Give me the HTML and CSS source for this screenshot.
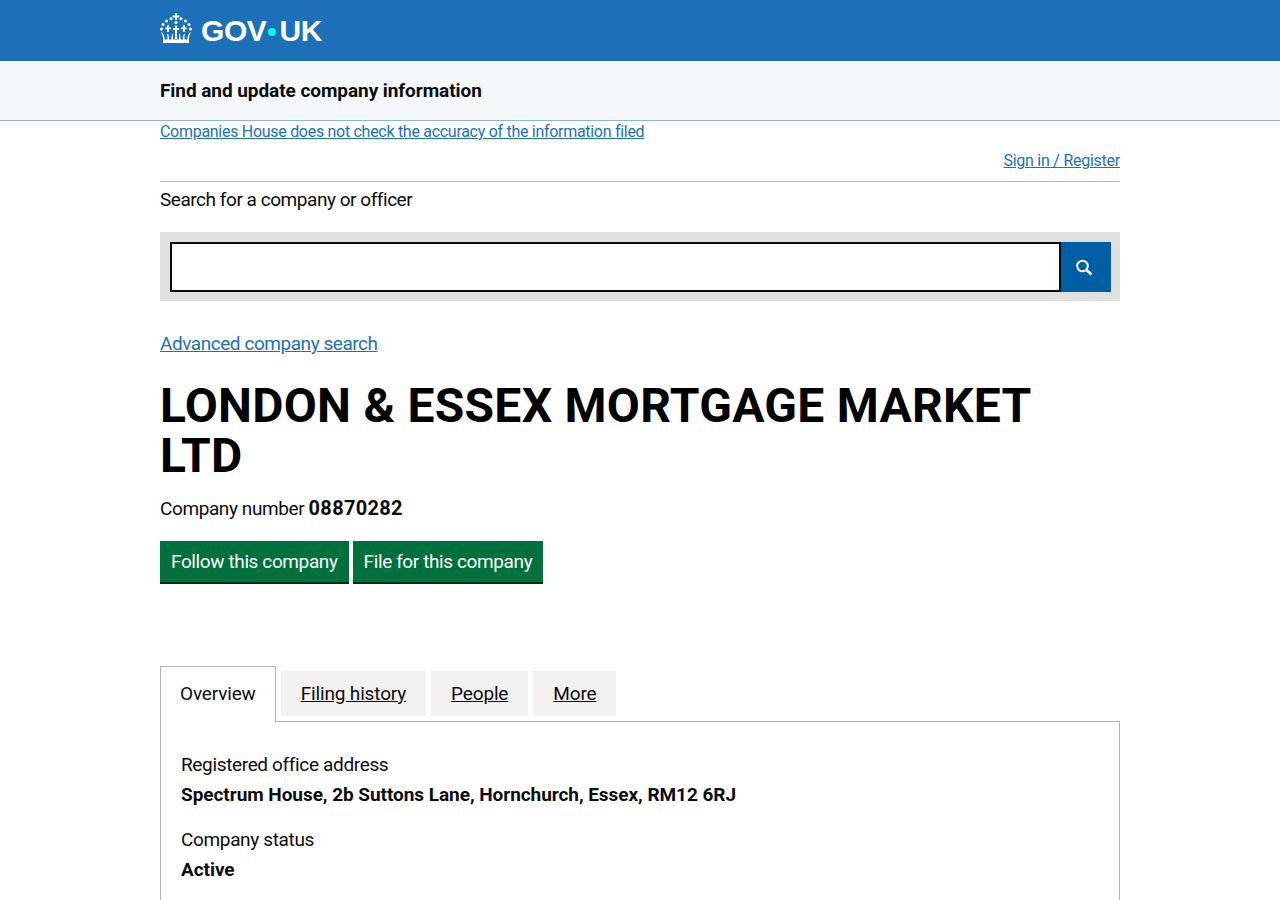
FILE: index.html
```html
<!DOCTYPE html>
<html lang="en">
<head>
    <meta charset="UTF-8">
    <meta name="viewport" content="width=device-width, initial-scale=1.0">
    <title>LONDON &amp; ESSEX MORTGAGE MARKET LTD - Find and update company information</title>
    <link rel="stylesheet" href="styles.css">
</head>
<body>
    <div class="header">
        <div class="wrap header-inner">
            <svg class="crown" viewBox="0 0 32 30" width="32" height="30" fill="#fff">
                <path d="M15 0h2v2.400h2.400v2H17V7h-2V4.400h-2.400v-2H15z"/>
                <circle cx="16" cy="9.500" r="1.500"/>
                <circle cx="11" cy="5.800" r="1.500"/>
                <circle cx="21" cy="5.800" r="1.500"/>
                <circle cx="6.500" cy="8" r="1.500"/>
                <circle cx="25.500" cy="8" r="1.500"/>
                <circle cx="3" cy="11.500" r="1.500"/>
                <circle cx="29" cy="11.500" r="1.500"/>
                <circle cx="1.500" cy="16" r="1.500"/>
                <circle cx="30.500" cy="16" r="1.500"/>
                <path d="M7 12h2v2.500h1.800v1.800H9V19H7v-2.700H5.200v-1.800H7z"/>
                <path d="M23 12h2v2.500h1.800v1.800H25V19h-2v-2.700h-1.800v-1.800H23z"/>
                <path d="M15 12.500h2V15h2v2h-2v9h-2v-9h-2v-2h2z"/>
                <path d="M1 19c2.500 1 3.500 3.500 3.800 8H3.200C3 24 2.300 21.500 1 19zM31 19c-2.500 1-3.500 3.500-3.800 8h1.600c.2-3 .9-5.500 2.200-8z"/>
                <path d="M7 20.500c1.800.8 2.300 3 2 6.500H7.300c.3-2.500.2-4.500-.3-6.500zM25 20.500c-1.800.8-2.300 3-2 6.500h1.700c-.3-2.500-.2-4.500.3-6.500z"/>
                <path d="M12.500 20c-1 2.200-1.300 4.500-1 7h1.800c-.3-2.500-.5-4.800-.8-7zM19.500 20c1 2.200 1.300 4.500 1 7h-1.800c.3-2.500.5-4.800.8-7z"/>
                <rect x="3" y="26.500" width="26" height="3.500"/>
            </svg>
            <span class="logo-text">GOV<span class="logo-dot"></span>UK</span>
        </div>
    </div>

    <div class="service-bar">
        <div class="wrap service-name">Find and update company information</div>
    </div>

    <div class="wrap">
        <div class="notice"><a href="#">Companies House does not check the accuracy of the information filed</a></div>
        <div class="account"><a href="#">Sign in / Register</a></div>

        <div class="search-label">Search for a company or officer</div>
        <form class="search-box">
            <input type="text" class="search-input" aria-label="Search for a company or officer">
            <button type="button" class="search-btn" aria-label="Search">
                <svg viewBox="0 0 20 20" width="20" height="20" fill="none" stroke="#fff">
                    <circle cx="6.500" cy="9" r="5.300" stroke-width="2"/>
                    <path d="M10.500 13l5 4.500" stroke-width="2.600"/>
                </svg>
            </button>
        </form>

        <div class="advanced"><a href="#">Advanced company search</a></div>

        <h1>LONDON &amp; ESSEX MORTGAGE MARKET LTD</h1>
        <p class="company-number">Company number <strong>08870282</strong></p>

        <div class="actions">
            <a href="#" class="btn">Follow this company</a>
            <a href="#" class="btn">File for this company</a>
        </div>

        <ul class="tabs">
            <li class="tab active">Overview</li>
            <li class="tab"><a href="#">Filing history</a></li>
            <li class="tab"><a href="#">People</a></li>
            <li class="tab"><a href="#">More</a></li>
        </ul>

        <div class="panel">
            <div class="field-label">Registered office address</div>
            <div class="field-value">Spectrum House, 2b Suttons Lane, Hornchurch, Essex, RM12 6RJ</div>
            <div class="field-label">Company status</div>
            <div class="field-value">Active</div>
        </div>
    </div>
</body>
</html>
```

FILE: styles.css
```css
* { margin: 0; padding: 0; box-sizing: border-box; }
html, body { height: 900px; overflow: hidden; }
body {
    font-family: Roboto, "Liberation Sans", sans-serif;
    font-size: 19px;
    letter-spacing: -0.4px;
    color: #0b0c0c;
    background: white;
}
strong { font-size: 20px; letter-spacing: 0.3px; }
a { color: #1d70b8; }
.wrap { width: 960px; margin: 0 auto; }

.header { height: 61px; background: #1d70b8; }
.header-inner { display: flex; align-items: center; height: 61px; padding-bottom: 5px; }
.crown { display: block; margin-right: 9px; }
.logo-text {
    font-family: "Liberation Sans", sans-serif;
    font-size: 30px; font-weight: bold; color: white; letter-spacing: -0.4px;
    display: flex; align-items: center; margin-top: 5px;
}
.logo-dot { width: 8px; height: 8px; margin: 2px 3px 0 2px; border-radius: 50%; background: #00ffe0; }

.service-bar { height: 60px; background: #f4f8fb; border-bottom: 1px solid #8fb4d4; }
.service-name { font-size: 19px; font-weight: bold; line-height: 59px; letter-spacing: -0.06px; }

.notice { font-size: 16px; line-height: 20px; letter-spacing: -0.29px; padding-top: 1px; }
.account { font-size: 16px; line-height: 20px; letter-spacing: -0.25px; text-align: right; margin-top: 9px; padding-bottom: 10px; border-bottom: 1px solid #b1b4b6; }
.search-label { line-height: 25px; margin-top: 5px; letter-spacing: -0.46px; }
.search-box { display: flex; height: 69px; padding: 10px 9px 9px 10px; margin-top: 20px; background: #dee0e2; }
.search-input { flex: 1; height: 50px; border: 2px solid #0b0c0c; background: white; }
.search-btn { width: 50px; height: 50px; border: none; background: #005ea5; display: flex; align-items: center; justify-content: center; }

.advanced { line-height: 25px; margin-top: 30px; letter-spacing: -0.45px; }

h1 { font-size: 48px; line-height: 50px; font-weight: bold; margin-top: 25px; letter-spacing: 0.27px; color: #000; }
.company-number { line-height: 25px; margin-top: 15px; }

.actions { display: flex; gap: 4px; margin-top: 20px; }
.btn {
    display: block; height: 43px; padding: 0 11px; line-height: 41px; letter-spacing: -0.39px;
    color: white; text-decoration: none; background: #00703c;
    border-bottom: 2px solid #002d18;
}

.tabs { display: flex; align-items: flex-end; gap: 5px; margin-top: 81px; list-style: none; height: 56px; letter-spacing: -0.16px; }
.tab { height: 45px; padding: 0 20px; line-height: 45px; background: #f3f2f1; margin-bottom: 5px; }
.tab a { color: #0b0c0c; }
.tab.active {
    height: 56px; line-height: 54px; background: white; margin-bottom: -1px;
    border: 1px solid #b1b4b6; border-bottom: none; padding: 0 19px; position: relative;
}
.panel { border: 1px solid #b1b4b6; padding: 30px 20px; height: 300px; }
.field-label { line-height: 25px; letter-spacing: -0.35px; }
.field-value { font-weight: bold; letter-spacing: -0.05px; line-height: 25px; margin-top: 5px; margin-bottom: 20px; }
```
